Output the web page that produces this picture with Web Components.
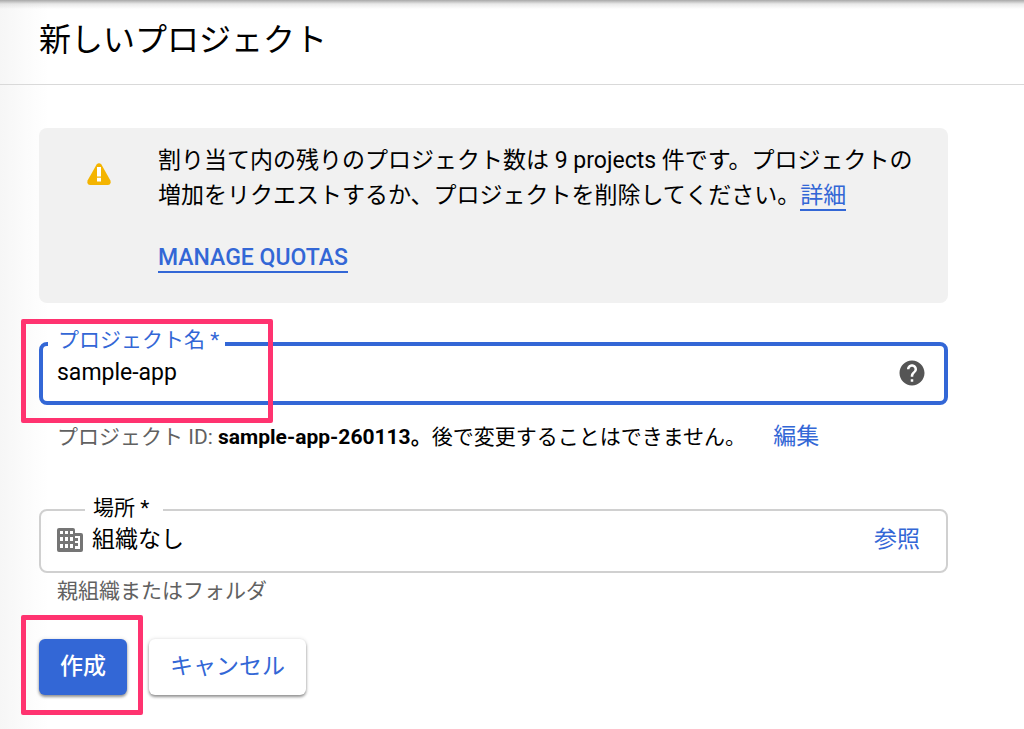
<!DOCTYPE html>
<html lang="ja">
<head>
<meta charset="utf-8">
<meta name="viewport" content="width=device-width, initial-scale=1">
<title>新しいプロジェクト</title>
<style>
  html { min-height: 100%; background: #fff; }
  body {
    margin: 0;
    font-family: Roboto, "Noto Sans CJK JP", sans-serif;
    font-size: 23px;
    line-height: 36px;
    color: #000;
  }
</style>
</head>
<body>
<project-page></project-page>

<script>
const define = (name, html, setup) => {
  const template = document.createElement('template');
  template.innerHTML = html;
  customElements.define(name, class extends HTMLElement {
    constructor() {
      super();
      this.attachShadow({ mode: 'open' }).append(template.content.cloneNode(true));
    }
    connectedCallback() { if (setup) setup(this, this.shadowRoot); }
  });
};

define('highlight-frame', `
  <style>
    :host {
      position: absolute;
      box-sizing: border-box;
      border: 5px solid #ff3370;
      border-radius: 2px;
      pointer-events: none;
      z-index: 2;
    }
  </style>`);

define('page-header', `
  <style>
    :host {
      display: block;
      padding: 16px 39px 20px;
      border-bottom: 1px solid #d9d9d9;
      background: linear-gradient(#a8a8a8, rgba(200,200,200,.4) 4px, transparent 9px);
    }
    h1 { margin: 0; font-size: 32px; line-height: 48px; font-weight: 400; }
  </style>
  <h1><slot></slot></h1>`);

define('text-link', `<style>
    :host { display: inline; }
    a { color: #3367d6; text-decoration: none; }
    :host([underlined]) a { border-bottom: 2px solid #3367d6; }
    :host([strong]) a { font-weight: 500; }
  </style><a href="#"><slot></slot></a>`);

define('quota-notice', `
  <style>
    :host {
      display: grid;
      grid-template-columns: 24px 1fr;
      column-gap: 47px;
      padding: 15px 24px 28px 48px;
      background: #f1f1f1;
      border-radius: 8px;
      line-height: 35px;
    }
    svg { display: block; width: 24px; height: 22px; margin-top: 20px; }
    p { margin: 0; }
    .action { margin-top: 27px; }
  </style>
  <svg viewBox="0 0 24 22" aria-hidden="true">
    <path fill="#f4b400" d="M9.6 1.5Q12-1.2 14.4 1.5L23.3 17.3Q24.6 21.4 20.7 22H3.3Q-.6 21.4.7 17.3Z"/>
    <path fill="#fff" d="M10 4h4v9.5h-4zM10 14.8h4v3.7h-4z"/>
  </svg>
  <div>
    <p><slot></slot></p>
    <p class="action"><slot name="action"></slot></p>
  </div>`);

define('outlined-field', `
  <style>
    :host { display: block; }
    .box {
      position: relative;
      display: flex;
      align-items: center;
      box-sizing: border-box;
      height: 64px;
      padding: 0 26px 2px 16px;
      border: 2px solid #d0d0d0;
      border-radius: 8px;
    }
    label {
      position: absolute;
      top: -19px;
      left: 44px;
      padding: 0 14px 0 8px;
      background: linear-gradient(#fff, #fff) center / 100% 16px no-repeat;
      font-size: 21px;
      line-height: 32px;
      white-space: nowrap;
    }
    input {
      flex: 1;
      min-width: 0;
      height: 36px;
      padding: 0;
      border: 0;
      outline: 0;
      background: none;
      color: inherit;
      font: inherit;
    }
    .hint { margin: 0; padding: 2px 18px 0; font-size: 21px; line-height: 32px; color: #616161; }
    :host([active]) .box { height: 63px; border: 4px solid #3367d6; padding: 0 17px 2px 14px; }
    :host([active]) label { left: 5px; padding: 0 6px 0 10px; top: -22px; color: #3367d6; }
    :host([active]) .hint { padding-top: 16px; padding-bottom: 1px; }
  </style>
  <div class="box">
    <slot name="leading"></slot>
    <label for="control"></label>
    <input id="control" type="text">
    <slot name="trailing"></slot>
    <slot name="marker"></slot>
  </div>
  <p class="hint"><slot></slot></p>`,
  (host, root) => {
    root.querySelector('label').textContent = host.getAttribute('label');
    const input = root.querySelector('input');
    input.value = host.getAttribute('value');
    input.readOnly = host.hasAttribute('readonly');
  });

define('help-icon', `
  <style>
    :host { display: block; }
    button { display: block; padding: 0; border: 0; background: none; }
    svg { display: block; width: 30px; height: 30px; }
  </style>
  <button type="button" aria-label="ヘルプ"><svg viewBox="0 0 24 24"><path fill="#555" d="M12 2C6.48 2 2 6.48 2 12s4.48 10 10 10 10-4.48 10-10S17.52 2 12 2zm1 17h-2v-2h2v2zm2.07-7.75l-.9.92C13.45 12.9 13 13.5 13 15h-2v-.5c0-1.1.45-2.1 1.17-2.83l1.24-1.26c.37-.36.59-.86.59-1.41 0-1.1-.9-2-2-2s-2 .9-2 2H8c0-2.21 1.79-4 4-4s4 1.79 4 4c0 .88-.36 1.68-.93 2.25z"/></svg></button>`);

define('organization-icon', `
  <style>
    :host { display: block; margin-right: 9px; }
    svg { display: block; width: 26px; height: 26px; }
  </style>
  <svg viewBox="0 0 26 26" aria-hidden="true">
    <path fill="#757575" fill-rule="evenodd" d="M2 1H16Q18 1 18 3V6H24Q26 6 26 8V23Q26 25 24 25H2Q0 25 0 23V3Q0 1 2 1ZM3 4v3h3V4ZM8 4v3h3V4ZM13 4v3h3V4ZM3 10v4h3v-4ZM8 10v4h3v-4ZM13 10v4h3v-4ZM3 17v4h3v-4ZM8 17v4h3v-4ZM13 17v4h3v-4ZM18 9v2h3v3h-3v2h3v3h-3v3h5V9Z"/>
  </svg>`);

define('action-button', `
  <style>
    :host { display: block; position: relative; }
    button {
      display: block;
      height: 56px;
      padding: 0 21px;
      border: 0;
      border-radius: 6px;
      background: #fff;
      color: #3367d6;
      font: inherit;
      line-height: 54px;
      box-shadow: 0 2px 3px rgba(0,0,0,.4), 0 0 4px rgba(0,0,0,.12);
    }
    :host([primary]) button { background: #3367d6; color: #fff; font-weight: 500; }
  </style>
  <button type="button"><slot></slot></button>
  <slot name="marker"></slot>`);

define('project-page', `
  <style>
    :host {
      display: block;
      min-height: 100vh;
      background: linear-gradient(to right, #f6f6f6, #fff 48px);
    }
    main { padding: 43px 76px 33px 39px; }
    .name { margin-top: 39px; }
    .place { margin-top: 55px; }
    .id { color: #000; }
    .id b { font-weight: 700; }
    .edit { margin-left: 22px; font-size: 23px; }
    .actions { display: flex; gap: 22px; margin-top: 32px; }
    .name-frame { top: -27px; left: -22px; width: 252px; height: 104px; }
    .create-frame { top: -24px; left: -18px; width: 122px; height: 100px; }
  </style>
  <page-header>新しいプロジェクト</page-header>
  <main>
    <quota-notice>割り当て内の残りのプロジェクト数は 9 projects 件です。プロジェクトの増加をリクエストするか、プロジェクトを削除してください。<text-link underlined>詳細</text-link><text-link slot="action" underlined strong>MANAGE QUOTAS</text-link></quota-notice>
    <outlined-field class="name" active label="プロジェクト名 *" value="sample-app">
      <help-icon slot="trailing"></help-icon>
      <highlight-frame slot="marker" class="name-frame"></highlight-frame>プロジェクト ID: <span class="id"><b>sample-app-260113。</b>後で変更することはできません。</span> <text-link class="edit">編集</text-link>
    </outlined-field>
    <outlined-field class="place" readonly label="場所 *" value="組織なし">
      <organization-icon slot="leading"></organization-icon>
      <text-link slot="trailing">参照</text-link>親組織またはフォルダ
    </outlined-field>
    <div class="actions">
      <action-button primary>作成<highlight-frame slot="marker" class="create-frame"></highlight-frame></action-button>
      <action-button>キャンセル</action-button>
    </div>
  </main>`);
</script>
</body>
</html>
